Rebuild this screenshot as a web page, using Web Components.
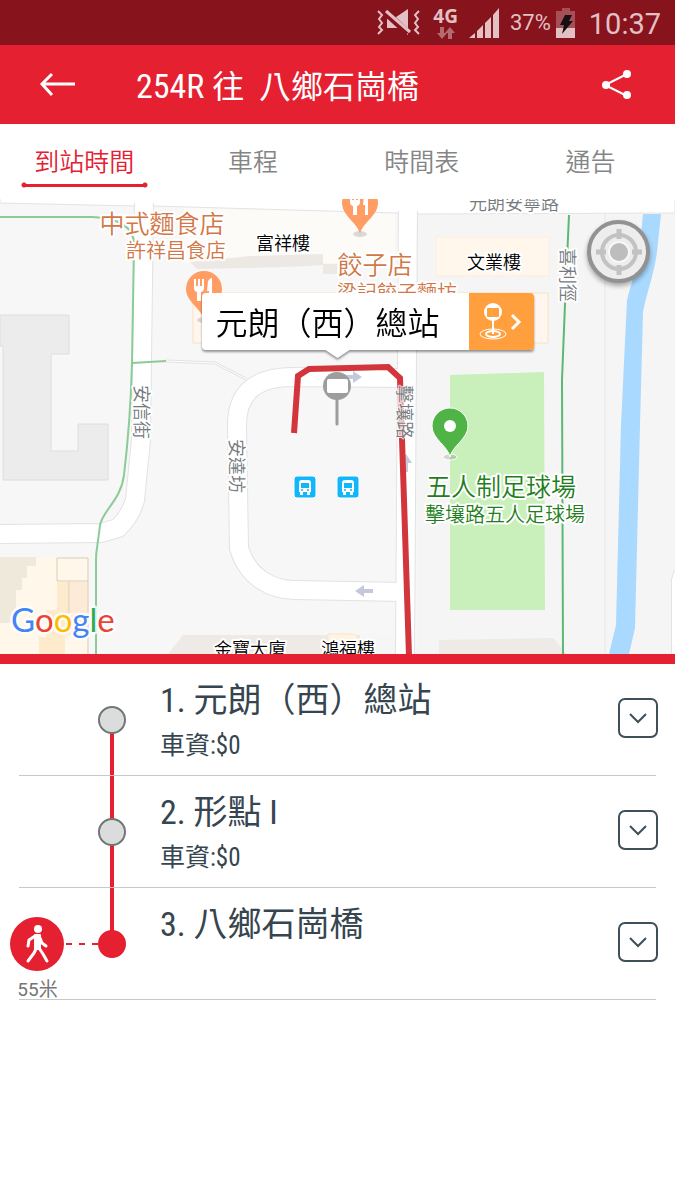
<!DOCTYPE html>
<html lang="zh-Hant">
<head>
<meta charset="utf-8">
<meta name="viewport" content="width=device-width, initial-scale=1">
<title>254R 往 八鄉石崗橋</title>
<style>
body { margin: 0; background: #fff; }
</style>
</head>
<body>
<route-app></route-app>
<script>
const define = (name, html, setup) => {
  const tpl = document.createElement('template');
  tpl.innerHTML = html;
  customElements.define(name, class extends HTMLElement {
    constructor() {
      super();
      this.attachShadow({ mode: 'open' }).append(tpl.content.cloneNode(true));
    }
    connectedCallback() { if (setup) setup(this, this.shadowRoot); }
  });
};

/* ---------- phone status bar ---------- */
define('status-bar', `
<style>
:host { display: flex; align-items: center; justify-content: flex-end; height: 45px; padding-right: 14px;
  background: #87131c; color: #e2c0c3; font-family: Roboto, sans-serif; }
svg { display: block; fill: currentColor; }
.mute { margin-right: 12px; }
.net { display: flex; flex-direction: column; align-items: center; margin-right: 11px; }
.net b { font: 700 19px/20px "Open Sans", sans-serif; }
.signal { margin-right: 10px; }
.pct { font-size: 22px; line-height: 28px; margin-right: 5px; }
.battery { margin-right: 13px; }
.time { font-size: 29px; line-height: 36px; padding-top: 2px; }
</style>
<svg class="mute" width="44" height="30" viewBox="0 0 44 30" aria-label="靜音">
  <path d="M10 11h6l15-10v26L21 20H10z"/>
  <path d="M8 4l23 21" stroke="#87131c" stroke-width="7"/>
  <path d="M9 3l24 21" stroke="currentColor" stroke-width="3"/>
  <g fill="none" stroke="currentColor" stroke-width="2">
    <path d="M1 3l4 4-3 4 3 4-3 4 3 3-4 4"/><path d="M42 3l-4 4 3 4-3 4 3 4-3 3 4 4"/>
  </g>
</svg>
<div class="net"><b>4G</b>
  <svg width="18" height="14" viewBox="0 0 18 14" opacity=".5"><path d="M3 1h4v6h3l-5 6-5-6h3zM11 13h4V7h3l-5-6-5 6h3z"/></svg>
</div>
<svg class="signal" width="31" height="30" viewBox="0 0 31 30"><path d="M0 30l6-5v5zM8 23l6-6v13H8zM16 15l6-6v21h-6zM24 7l6-7v30h-6z"/></svg>
<span class="pct">37%</span>
<svg class="battery" width="20" height="30" viewBox="0 0 20 30">
  <path d="M6 0h8v3h5v17H0V3h6z" opacity=".35"/><path d="M0 20h19v10H0z"/>
  <path d="M9 7h7l-3 6h4L6 26l2-9H4z" fill="#161012"/>
</svg>
<span class="time">10:37</span>
`);

/* ---------- red title bar ---------- */
define('title-bar', `
<style>
:host { display: flex; align-items: center; height: 79px; background: #e52031; color: #fff; }
button { border: 0; padding: 0; background: none; color: inherit; display: grid; place-items: center; cursor: pointer; }
.back { width: 116px; height: 79px; }
.share { width: 116px; height: 79px; }
h1 { flex: 1; margin: 0; padding: 3px 0 0 20px; font-weight: 400; font-size: 32px; line-height: 40px; white-space: pre; }
::slotted(span) { font-size: 34px; }
svg { display: block; }
</style>
<button class="back" aria-label="返回"><svg width="38" height="26" viewBox="0 0 38 26" fill="none" stroke="#fff" stroke-width="3"><path d="M13 2L3 12l10 11M3 12h33"/></svg></button>
<h1><slot></slot></h1>
<button class="share" aria-label="分享"><svg width="32" height="32" viewBox="0 0 32 32" fill="#fff"><path d="M26 5L4 16l22 11" fill="none" stroke="#fff" stroke-width="2"/><circle cx="26" cy="5" r="4"/><circle cx="5" cy="16" r="4"/><circle cx="26" cy="26" r="4"/></svg></button>
`);

/* ---------- tabs ---------- */
define('tab-strip', `
<style>
:host { display: grid; grid-template-columns: repeat(4, 1fr); height: 75px; background: #fff; }
</style>
<slot></slot>
`, host => host.setAttribute('role', 'tablist'));

define('tab-item', `
<style>
:host { display: flex; justify-content: center; color: #858585; }
button { border: 0; padding: 21px 0 0; background: none; color: inherit; font: inherit; font-weight: 350; font-size: 25px; line-height: 36px;
  width: 127px; cursor: pointer; display: flex; flex-direction: column; align-items: center; gap: 1px; white-space: nowrap; }
i { display: none; width: 100%; height: 6px;
  background: radial-gradient(circle at 3px 50%, #e52031 2px, transparent 3px), radial-gradient(circle at calc(100% - 3px) 50%, #e52031 2px, transparent 3px),
    linear-gradient(#e52031, #e52031) center / calc(100% - 6px) 3px no-repeat; }
:host([selected]) { color: #e52031; }
:host([selected]) i { display: block; }
</style>
<button role="tab"><slot></slot><i></i></button>
`, (host, root) => root.querySelector('button').setAttribute('aria-selected', host.hasAttribute('selected')));

/* ---------- bubble over the chosen stop ---------- */
define('stop-bubble', `
<style>
:host { display: flex; height: 57px; border-radius: 4px; background: #fff; color: #000; filter: drop-shadow(0 2px 1px #0006); }
span { box-sizing: border-box; padding-left: 14px; width: 267px; font-size: 32px; line-height: 62px; font-weight: 350; white-space: nowrap; }
button { width: 65px; border: 0; padding: 0; background: #ff9f3d; border-radius: 0 4px 4px 0; display: grid; place-items: center; cursor: pointer; }
.tip { position: absolute; left: 124px; top: 57px; width: 24px; height: 8px; background: #fff; clip-path: polygon(0 0, 100% 0, 50% 100%); }
</style>
<span><slot></slot></span>
<button aria-label="車站詳情"><svg width="44" height="38" viewBox="0 0 44 38" fill="none" stroke="#fff">
  <ellipse cx="14" cy="31" rx="13" ry="5" stroke-width="1"/><ellipse cx="14" cy="31" rx="7" ry="3" stroke-width="2"/>
  <path d="M14 17v14" stroke-width="2"/>
  <circle cx="14" cy="9" r="9" fill="#fff" stroke="none"/><rect x="8" y="5" width="12" height="9" rx="1" fill="#ff9f3d" stroke="none"/>
  <path d="M33 12l7 7-7 7" stroke-width="3"/></svg></button>
<i class="tip"></i>
`);

/* ---------- map ---------- */
define('route-map', `
<style>
:host { display: block; position: relative; height: 455px; overflow: hidden; border-bottom: 10px solid #e52031; background: #f7f7f7; }
.canvas { display: block; width: 100%; height: 100%; }
text { font-weight: 350; text-anchor: middle; paint-order: stroke; stroke: #fff; stroke-width: 4px; stroke-linejoin: round; }
.big { font-size: 25px; } .mid { font-size: 20px; } .small { font-size: 18px; }
.food { fill: #d27748; } .green { fill: #1f7f20; } .road { fill: #757a7e; } .dark { fill: #000; }
.logo { font: 33px Lato, sans-serif; text-anchor: start; stroke: #fffc; stroke-width: 5px; }
.locate { position: absolute; right: 25px; top: 21px; width: 63px; height: 63px; padding: 0; border: 4px solid #929292; border-radius: 50%;
  background: #ededed; box-shadow: 0 3px 5px #0005; display: grid; place-items: center; cursor: pointer; }
stop-bubble { position: absolute; left: calc(50% - 136px); top: 94px; }
</style>
<svg class="canvas" viewBox="0 199 675 455" preserveAspectRatio="xMidYMid slice">
  <defs>
    <g id="pin"><ellipse cx="0" cy="31" rx="7" ry="3" fill="#0002"/><path d="M0 31C-2 20-18 13-18 0A18 18 0 0 1 18 0C18 13 2 20 0 31z"/></g>
    <g id="fork" fill="#fff"><path d="M-10-10h2v7h2v-7h2v7h2v-7h2V-1q0 3-3 4v9h-4V3q-3-1-3-4zM4-8q2-3 4-3V12H5V2H3z"/></g>
    <g id="bus"><rect x="-11" y="-11" width="22" height="22" rx="3" fill="#12b7fb" stroke="#fff"/><path d="M-6-4q0-3 3-3h6q3 0 3 3V5H5v3H2V5h-4v3h-3V5h-1z" fill="#fff"/><path d="M-4-4h8v5h-8z" fill="#12b7fb"/><circle cx="-3" cy="3" r="1" fill="#12b7fb"/><circle cx="3" cy="3" r="1" fill="#12b7fb"/></g>
    <path id="arrow" d="M-9-2h9v-4l9 6-9 6V2h-9z" fill="#c5c8da"/>
  </defs>
  <rect y="199" width="675" height="455" fill="#f7f7f7"/>
  <path d="M417 214H675V654H417z" fill="#f5f5f5"/>
  <path d="M184 208l211 5v50H184z" fill="#fdfbf8"/>
  <path d="M190 262l60-6 73-2v10h14v10h-14v-9l-35 2-91 2z" fill="#ece8e3"/>
  <path d="M193 293H548V343H193z" fill="#fff7ef" stroke="#fbe0c2"/>
  <path d="M436 237H549V276H436z" fill="#fff6ec" stroke="#fdeedd"/>
  <path d="M0 315H69V354H51V451H78V424H108V480H3V346H0z" fill="#ececec" stroke="#dedede"/>
  <path d="M0 195H675V213L417 214 395 213 155 206 137 206 0 203z" fill="#fff" stroke="#e3e3e3"/>
  <!-- streets: grey casing below, white surface above -->
  <g fill="none" stroke="#e2e2e2" stroke-width="20">
    <path d="M144 203L142 360 141 440 135 500Q130 517 118 528L101 533 0 534"/>
    <path d="M408 211L405 654"/>
    <path d="M405 378L290 377C252 378 237 396 237 425L239 548C248 578 272 590 295 590L405 592"/>
    <path d="M677 570l-3 10v90" stroke-width="6"/>
  </g>
  <g fill="none" stroke="#fff" stroke-width="18">
    <path d="M144 200L142 360 141 440 135 500Q130 517 118 528L101 533 0 534"/>
    <path d="M408 200L405 654"/>
    <path d="M405 378L290 377C252 378 237 396 237 425L239 548C248 578 272 590 295 590L405 592"/>
    <path d="M678 570l-3 10v90" stroke-width="6"/>
  </g>
  <path d="M166 361l49 2 31 16" fill="none" stroke="#e2e2e2" stroke-width="3"/><path d="M166 361l49 2 31 16" fill="none" stroke="#fff"/>
  <!-- corner houses -->
  <path d="M0 558H87V654H0z" fill="#fff8ea"/>
  <path d="M0 557H36V566H27V578H22V590H16V623H0z" fill="#efe9dc"/>
  <path d="M57 582H69V615H87V635H65V654H39V637H46V610H57z" fill="#feebcd"/><path d="M70 582H88V613H70z" fill="#fdebd8"/>
  <path d="M57 558H88V581H57zM69 581V613M88 581V654" fill="none" stroke="#dccbb3"/>
  <path d="M168 654L183 635H395V654z" fill="#eeeae6"/><path d="M328 634H354L360 640V654H328z" fill="#fff3e4" stroke="#fbe3c6"/>
  <path d="M360 634H395V654H360z" fill="#f6f6f6"/>
  <path d="M439 640L553 638 567 654H439z" fill="#eeeae6"/>
  <path d="M450 375L544 372 545 610H450z" fill="#c9efba"/>
  <path d="M605 214V654" stroke="#e9e7e1"/>
  <path d="M643 214H661L657 252C654 275 646 295 643 312L640 425 635 628 629 654H609L616 625 621 425 627 300C632 280 638 265 640 245z" fill="#a9d9ff"/>
  <path d="M0 217H92C120 218 134 227 134 245L132 363C131 400 127 450 124 475C121 500 103 510 100 525C98 545 96 548 96 560V654M132 363L166 361" fill="none" stroke="#8bcb96" stroke-width="2"/>
  <path d="M569 215L565 304 562 380 563 654" fill="none" stroke="#5cb974" stroke-width="2"/>
  <use href="#arrow" x="353" y="377"/><g transform="translate(364 591) rotate(180)"><use href="#arrow"/></g><g transform="translate(406 463) rotate(-90)"><use href="#arrow"/></g>
  <path d="M294 433L298 376 309 369 388 367 400 378 404 500 409 656" fill="none" stroke="#d2363c" stroke-width="6"/>
  <path d="M397 388h8l1 50h-8z" fill="#fff8"/>
  <use href="#bus" x="305" y="487"/><use href="#bus" x="348" y="487"/>
  <g fill="#ff9d65"><use href="#pin" x="204" y="289"/><use href="#pin" x="360" y="203"/></g>
  <use href="#fork" x="204" y="289"/><use href="#fork" x="360" y="203"/>
  <path d="M337 398V424" stroke="#9c9e9d" stroke-width="3" stroke-linecap="round"/><circle cx="337" cy="386" r="14" fill="#9c9e9d"/><rect x="327" y="379" width="21" height="14" rx="2" fill="#fff"/>
  <g stroke="#fff" fill="#50b346"><use href="#pin" x="450" y="426"/></g><circle cx="450" cy="426" r="6" fill="#fff"/>

  <text class="road small" x="514" y="210">元朗安寧路</text>
  <text class="food big" x="162" y="233">中式麵食店</text>
  <text class="food mid" x="176" y="258">許祥昌食店</text>
  <text class="dark small" x="283" y="250">富祥樓</text>
  <text class="food big" x="375" y="274">餃子店</text>
  <text class="food mid" x="397" y="300">梁記餃子麵坊</text>
  <text class="dark small" x="494" y="269">文業樓</text>
  <text class="road small" transform="translate(561 275) rotate(90)">喜利徑</text>
  <text class="road small" transform="translate(135 412) rotate(90)">安信街</text>
  <text class="road small" transform="translate(230 466) rotate(90)">安達坊</text>
  <text class="road small" style="stroke-width:2px;stroke:#fffa" transform="translate(398 412) rotate(90)">擊壤路</text>
  <text class="green big" x="501" y="496">五人制足球場</text>
  <text class="green mid" x="505" y="522">擊壤路五人足球場</text>
  <text class="dark small" x="250" y="656">金寶大廈</text>
  <text class="dark small" x="348" y="656">鴻福樓</text>
  <text class="logo" x="11" y="632"><tspan fill="#4285f4">G</tspan><tspan fill="#ea4335">o</tspan><tspan fill="#fbbc05">o</tspan><tspan fill="#4285f4">g</tspan><tspan fill="#34a853">l</tspan><tspan fill="#ea4335">e</tspan></text>
</svg>
<stop-bubble><slot></slot></stop-bubble>
<button class="locate" aria-label="我的位置"><svg width="48" height="48" viewBox="0 0 48 48" fill="none" stroke="#c2c2c2">
  <circle cx="24" cy="24" r="17" stroke-width="4"/><path d="M24 1v10M24 37v10M1 24h10M37 24h10" stroke-width="5"/><circle cx="24" cy="24" r="11" fill="#fff" stroke="none" opacity=".6"/><circle cx="24" cy="24" r="9" fill="#bdbdbd" stroke="none"/></svg></button>
`);

/* ---------- one stop in the list ---------- */
define('stop-row', `
<style>
:host { display: grid; grid-template-columns: 160px 1fr 57px; grid-template-rows: 111px 1px; color: #36454f; }
.rail { display: grid; }
.rail > * { grid-area: 1 / 1; }
.rail svg { display: block; }
.walk { display: none; }
.dist { align-self: end; width: 75px; text-align: center; font: 19px/20px Roboto, "Noto Sans CJK TC", sans-serif; color: #757575; }
.name { margin: 0; padding-top: 15px; font-size: 34px; font-weight: 400; line-height: 42px; }
.fare { margin: 0; padding-top: 7px; font-size: 25px; line-height: 36px; }
button { align-self: center; width: 40px; height: 40px; margin-bottom: 3px; padding: 0; border: 2px solid #3f4f59; border-radius: 7px; background: #fff; color: inherit; display: grid; place-items: center; cursor: pointer; }
.rule { grid-column: 1 / -1; margin: 0 19px; background: #c8c8c8; position: relative; }
:host([place="first"]) .up, :host([place="last"]) .down { display: none; }
:host([place="last"]) circle.dot { fill: #e52031; stroke: #e52031; }
:host([place="last"]) .walk { display: block; }
</style>
<div class="rail">
  <svg width="160" height="112" viewBox="0 0 160 112">
    <path class="up" d="M112 0V56" stroke="#e52031" stroke-width="4"/><path class="down" d="M112 56V112" stroke="#e52031" stroke-width="4"/>
    <circle class="dot" cx="112" cy="56" r="13" fill="#dbdddc" stroke="#757575" stroke-width="2"/>
    <g class="walk"><circle cx="37" cy="56" r="27" fill="#e52031"/>
      <path d="M66 56h34" stroke="#e52031" stroke-width="2" stroke-dasharray="6 7"/>
      <circle cx="38" cy="41" r="4" fill="#fff"/>
      <path d="M35 47h5v14h-5z" fill="#fff" stroke="#fff" stroke-width="2" stroke-linejoin="round"/>
      <path d="M35 48l-6 4-1 6M40 50l2 5 4 3M36 61l-2 4-6 8M39 60l4 6 4 7" fill="none" stroke="#fff" stroke-width="3" stroke-linecap="round" stroke-linejoin="round"/>
    </g>
  </svg>
  <span class="dist"><slot name="distance"></slot></span>
</div>
<div><h2 class="name"><slot></slot></h2><p class="fare"><slot name="fare"></slot></p></div>
<button aria-label="展開"><svg width="18" height="12" viewBox="0 0 18 12" fill="none" stroke="#3f4f59" stroke-width="2"><path d="M1 2l8 8 8-8"/></svg></button>
<div class="rule"></div>
`, host => host.setAttribute('role', 'listitem'));

define('route-app', `
<style>
:host { display: block; font-family: "Roboto Condensed", "Liberation Sans Narrow", Roboto, "Noto Sans CJK TC", sans-serif; }
</style>
<status-bar></status-bar>
<title-bar><span>254R </span>往  八鄉石崗橋</title-bar>
<tab-strip><tab-item selected>到站時間</tab-item><tab-item>車程</tab-item><tab-item>時間表</tab-item><tab-item>通告</tab-item></tab-strip>
<route-map>元朗（西）總站</route-map>
<main role="list">
  <stop-row place="first">1. 元朗（西）總站<span slot="fare">車資:$0</span></stop-row>
  <stop-row>2. 形點 I<span slot="fare">車資:$0</span></stop-row>
  <stop-row place="last">3. 八鄉石崗橋<span slot="distance">55米</span></stop-row>
</main>
`);
</script>
</body>
</html>
